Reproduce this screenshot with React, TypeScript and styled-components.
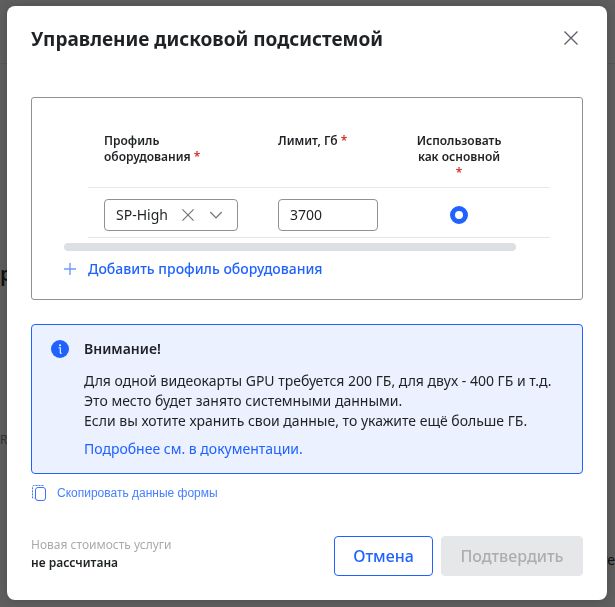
import React from 'react';
import styled, { createGlobalStyle } from 'styled-components';

const blue = '#1f62ff';
const ink = '#1f2224';
const font = '"Noto Sans", "Open Sans", sans-serif';

const GlobalStyle = createGlobalStyle`
  *, *::before, *::after { box-sizing: border-box; }
  html, body { margin: 0; height: 100%; }
  body { background: #5f5f5f; color: ${ink}; font-family: ${font}; overflow: hidden; }
  button, input, select { font-family: inherit; color: inherit; }
`;

const Page = styled.div`
  height: 100vh;
  display: flex;
  flex-direction: column;
  overflow: hidden;
`;

const PageBand = styled.div<{ $height: number; $line?: boolean }>`
  height: ${p => p.$height}px;
  flex: none;
  border-bottom: ${p => (p.$line ? '1px solid #575757' : 'none')};
`;

const PageTitle = styled.div`
  height: 32px;
  line-height: 32px;
  font-size: 20px;
  font-weight: 600;
  color: #111;
`;

const PageNote = styled.div`
  height: 20px;
  line-height: 20px;
  font-size: 12px;
  color: #333;
`;

const PageTail = styled.div`
  height: 24px;
  line-height: 24px;
  font-size: 14px;
  color: #111;
  display: flex;
  justify-content: flex-end;
`;

const Overlay = styled.div`
  position: fixed;
  inset: 0;
  padding: 6px 8px 6px 7px;
  overflow: auto;
`;

const Dialog = styled.section`
  background: #fff;
  border-radius: 8px;
  padding: 17px 24px 24px;
  box-shadow: 0 0 12px rgba(0, 0, 0, 0.2);
`;

const Header = styled.header`
  display: flex;
  align-items: flex-start;
  justify-content: space-between;
  margin-bottom: 42px;
`;

const Title = styled.h1`
  margin: 0;
  font-size: 19px;
  line-height: 32px;
  font-weight: 700;
`;

const IconButton = styled.button`
  display: flex;
  align-items: center;
  justify-content: center;
  width: 24px;
  height: 24px;
  padding: 0;
  border: 0;
  background: none;
  color: #5b5f6d;
  flex: none;
`;

const CloseButton = styled(IconButton)`
  height: 30px;
`;

const Panel = styled.div`
  border: 1px solid #8f9193;
  border-radius: 3px;
  padding: 23px 32px 20px;
`;

const Table = styled.table`
  width: calc(100% - 24px);
  margin-left: 24px;
  border-collapse: collapse;
  table-layout: fixed;
`;

const Th = styled.th<{ $width?: number; $center?: boolean }>`
  width: ${p => (p.$width ? `${p.$width}px` : 'auto')};
  height: 66px;
  padding: ${p => (p.$center ? '12px 48px 6px 8px' : '12px 0 6px 16px')};
  text-align: ${p => (p.$center ? 'center' : 'left')};
  vertical-align: top;
  font-size: 12px;
  line-height: 16px;
  font-weight: 600;
  border-bottom: 1px solid #e6e7e8;
`;

const Td = styled.td<{ $center?: boolean }>`
  height: 50px;
  padding: ${p => (p.$center ? '2px 48px 0 8px' : '4px 0 0 16px')};
  text-align: ${p => (p.$center ? 'center' : 'left')};
  vertical-align: middle;
  border-bottom: 1px solid #e6e7e8;
`;

const Star = styled.span`
  color: #d0312d;
`;

const SelectBox = styled.div`
  display: flex;
  align-items: center;
  gap: 4px;
  width: 134px;
  height: 32px;
  padding: 0 8px 0 11px;
  border: 1px solid #8f9193;
  border-radius: 4px;
`;

const Select = styled.select`
  appearance: none;
  border: 0;
  padding: 0;
  background: none;
  font-size: 14px;
  line-height: 20px;
  width: 56px;
  flex: none;
`;

const SelectIcons = styled.div`
  display: flex;
  color: #707376;
  gap: 4px;
  button { color: inherit; }
`;

const NumberInput = styled.input`
  display: block;
  width: 100px;
  height: 32px;
  padding: 0 11px;
  border: 1px solid #8f9193;
  border-radius: 4px;
  background: #fff;
  font-size: 14px;
`;

const Radio = styled.input`
  appearance: none;
  display: inline-block;
  vertical-align: middle;
  width: 18px;
  height: 18px;
  margin: 0;
  border: 5px solid ${blue};
  border-radius: 50%;
  background: #fff;
`;

const ScrollTrack = styled.div`
  display: flex;
  margin: 5px 0 8px;
`;

const ScrollThumb = styled.div`
  width: 93%;
  height: 8px;
  border-radius: 4px;
  background: #dce0e5;
`;

const AddButton = styled.button`
  display: flex;
  align-items: center;
  gap: 12px;
  padding: 0;
  border: 0;
  background: none;
  && { color: ${blue}; }
  font-size: 14px;
  line-height: 20px;
  font-weight: 550;
`;

const Notice = styled.div`
  display: flex;
  gap: 15px;
  margin-top: 24px;
  padding: 14px 18px 14px 19px;
  border: 1px solid ${blue};
  border-radius: 4px;
  background: #ebf1ff;
  font-size: 14px;
  line-height: 20px;
  font-weight: 450;

  > svg { flex: none; margin-top: 1px; }
`;

const NoticeTitle = styled.h2`
  margin: 0 0 12px;
  font-size: 14px;
  line-height: 20px;
  font-weight: 600;
`;

const NoticeText = styled.p`
  margin: 0 0 8px;
`;

const Link = styled.a`
  color: ${blue};
  text-decoration: none;
`;

const CopyButton = styled.button`
  display: flex;
  align-items: center;
  gap: 9px;
  margin-top: 9px;
  padding: 0;
  border: 0;
  background: none;
  && { color: #4680ff; font-family: "Liberation Sans", Arial, sans-serif; }
  font-size: 12px;
  line-height: 20px;
`;

const Footer = styled.footer`
  display: flex;
  align-items: flex-start;
  justify-content: space-between;
  margin-top: 33px;
`;

const Cost = styled.div`
  font-size: 12px;
  line-height: 18px;
  color: #a8abad;

  strong { display: block; font-weight: 600; color: ${ink}; }
`;

const Actions = styled.div`
  display: flex;
  gap: 8px;
`;

const Button = styled.button<{ $width: number }>`
  width: ${p => p.$width}px;
  height: 40px;
  padding: 0;
  border: 1px solid ${blue};
  border-radius: 4px;
  background: #fff;
  && { color: ${blue}; }
  font-size: 16px;
  font-weight: 550;

  &&:disabled { color: #abaeb0; background: #e6e7e9; border-color: #e6e7e9; }
`;

const Cross = ({ size }: { size: number }) => (
  <svg width={size} height={size} viewBox="0 0 14 14" fill="none" stroke="currentColor" strokeWidth={1.3} aria-hidden="true">
    <path d="M.5.5l13 13M13.5.5l-13 13" />
  </svg>
);

const Chevron = () => (
  <svg width="24" height="24" viewBox="0 0 24 24" fill="none" stroke="currentColor" strokeWidth="1.2" aria-hidden="true">
    <path d="M6.3 9l5.7 6 5.7-6" />
  </svg>
);

const Plus = () => (
  <svg width="12" height="12" viewBox="0 0 12 12" fill="none" stroke="#6f99ff" strokeWidth="1.4" aria-hidden="true">
    <path d="M6 0v12M0 6h12" />
  </svg>
);

const Info = () => (
  <svg width="18" height="18" viewBox="0 0 18 18" aria-hidden="true">
    <circle cx="9" cy="9" r="9" fill={blue} />
    <circle cx="9" cy="5.2" r="1" fill="#fff" />
    <path d="M7.6 7.8h1.7v4.6q0 1 1.3 1" fill="none" stroke="#fff" strokeWidth="1.1" />
  </svg>
);

const Copy = () => (
  <svg width="17" height="18" viewBox="0 0 17 18" fill="none" stroke="#3f73f5" strokeWidth="1" aria-hidden="true">
    <rect x="4.5" y="3.5" width="10" height="13" rx="2.5" />
    <path d="M12.5 1.5H3A1.5 1.5 0 0 0 1.5 3v11h2" strokeDasharray="2 1" />
  </svg>
);

export default function App() {
  return (
    <>
      <GlobalStyle />
      <Page aria-hidden="true">
        <PageBand $height={64} $line />
        <PageBand $height={194} />
        <PageTitle>р</PageTitle>
        <PageBand $height={140} />
        <PageNote>RA</PageNote>
        <PageBand $height={98} />
        <PageTail>те</PageTail>
      </Page>
      <Overlay>
        <Dialog role="dialog" aria-modal="true" aria-labelledby="dialog-title">
          <Header>
            <Title id="dialog-title">Управление дисковой подсистемой</Title>
            <CloseButton type="button" aria-label="Закрыть"><Cross size={14} /></CloseButton>
          </Header>

          <Panel>
            <Table>
              <thead>
                <tr>
                  <Th $width={174}>Профиль<br />оборудования <Star>*</Star></Th>
                  <Th $width={146}>Лимит, Гб <Star>*</Star></Th>
                  <Th $center>Использовать как основной <Star>*</Star></Th>
                </tr>
              </thead>
              <tbody>
                <tr>
                  <Td>
                    <SelectBox>
                      <Select aria-label="Профиль оборудования" defaultValue="SP-High">
                        <option>SP-High</option>
                      </Select>
                      <SelectIcons>
                        <IconButton type="button" aria-label="Очистить"><Cross size={12} /></IconButton>
                        <Chevron />
                      </SelectIcons>
                    </SelectBox>
                  </Td>
                  <Td><NumberInput aria-label="Лимит, Гб" defaultValue="3700" /></Td>
                  <Td $center><Radio type="radio" name="main" aria-label="Использовать как основной" defaultChecked /></Td>
                </tr>
              </tbody>
            </Table>
            <ScrollTrack><ScrollThumb /></ScrollTrack>
            <AddButton type="button"><Plus />Добавить профиль оборудования</AddButton>
          </Panel>

          <Notice>
            <Info />
            <div>
              <NoticeTitle>Внимание!</NoticeTitle>
              <NoticeText>
                Для одной видеокарты GPU требуется 200 ГБ, для двух - 400 ГБ и т.д.<br />
                Это место будет занято системными данными.<br />
                Если вы хотите хранить свои данные, то укажите ещё больше ГБ.
              </NoticeText>
              <Link href="#docs">Подробнее см. в документации.</Link>
            </div>
          </Notice>

          <CopyButton type="button"><Copy />Скопировать данные формы</CopyButton>

          <Footer>
            <Cost>Новая стоимость услуги<strong>не рассчитана</strong></Cost>
            <Actions>
              <Button type="button" $width={99}>Отмена</Button>
              <Button type="button" $width={142} disabled>Подтвердить</Button>
            </Actions>
          </Footer>
        </Dialog>
      </Overlay>
    </>
  );
}
